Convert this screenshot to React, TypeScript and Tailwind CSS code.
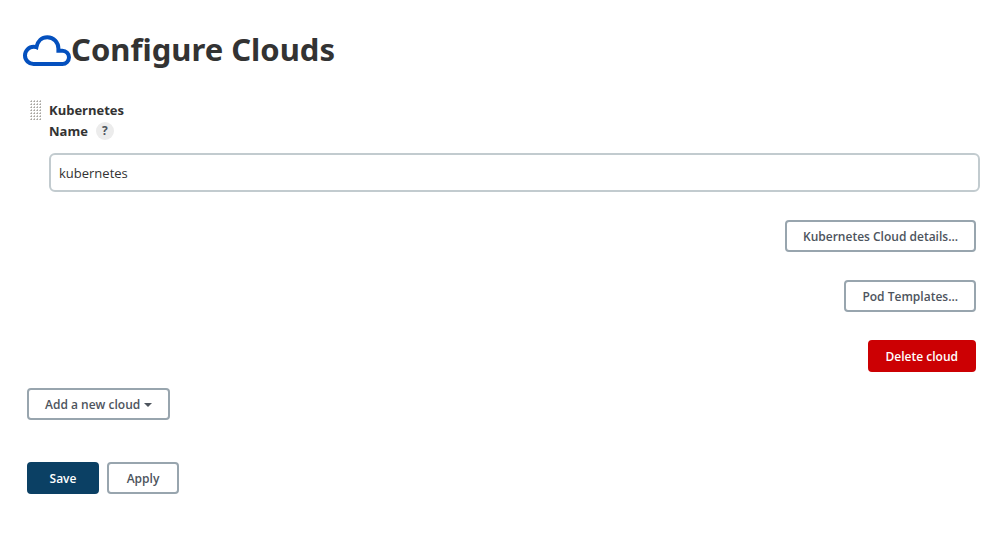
import { useState } from "react";
import type { ButtonHTMLAttributes } from "react";

const variants = {
  outline: "border-[#98a5ae] bg-white text-[#4d545d]",
  danger: "border-[#cc0003] bg-[#cc0003] text-white",
  primary: "border-[#0b4064] bg-[#0b4064] text-white",
};

type ButtonProps = ButtonHTMLAttributes<HTMLButtonElement> & {
  variant?: keyof typeof variants;
};

function Button({ variant = "outline", className = "px-4", ...props }: ButtonProps) {
  return (
    <button
      type="button"
      className={`flex h-8 items-center justify-center rounded border-2 pt-0.5 text-xs font-semibold whitespace-nowrap ${variants[variant]} ${className}`}
      {...props}
    />
  );
}

function CloudIcon() {
  return (
    <svg
      className="h-8 w-12 shrink-0"
      viewBox="0 0 48 32"
      fill="none"
      stroke="#0450be"
      strokeWidth="4"
      aria-hidden="true"
    >
      <path d="M10.6 29A8.6 8.6 0 0 1 10.6 11.8C11.8 11.8 12.6 11.9 13.4 12.2C14.5 6.2 18.8 2.2 24.3 2.2C30.8 2.2 35.4 7.4 35.4 13.6V15.7H39.35A6.65 6.65 0 0 1 39.35 29Z" />
    </svg>
  );
}

function DragHandle() {
  return (
    <svg className="mt-1 h-5 w-3 shrink-0" viewBox="0 0 12 20" aria-hidden="true">
      <defs>
        <pattern id="grip" width="3" height="3" patternUnits="userSpaceOnUse">
          <rect x="0" y="1" width="2" height="1" fill="#c8c6c2" />
          <rect x="1" y="0" width="1" height="1" fill="#c8c6c2" />
          <rect x="1" y="1" width="1" height="1" fill="#a5a39f" />
        </pattern>
      </defs>
      <rect width="12" height="20" fill="url(#grip)" />
    </svg>
  );
}

export default function App() {
  const [name, setName] = useState("kubernetes");
  return (
    <main className="bg-white px-[23px] pt-[30px] pb-10 font-['Open_Sans','Noto_Sans',sans-serif] text-sm text-[#333333]">
      <h1 className="flex h-[42px] items-center font-['Noto_Sans','Open_Sans',sans-serif] text-[31px] leading-9 font-bold">
        <CloudIcon />
        <span className="pb-1">Configure Clouds</span>
      </h1>

      <form>
        <section className="mt-6 flex gap-[7px] pl-[7px]">
          <DragHandle />
          <div className="min-w-0 flex-1">
            <h2 className="pt-1 text-[13px]/[20px] font-bold">Kubernetes</h2>
            <div className="flex h-[22px] items-center gap-2">
              <label htmlFor="cloud-name" className="text-[13px] font-bold">
                Name
              </label>
              <button
                type="button"
                aria-label="Help for name"
                className="flex size-[18px] items-center justify-center rounded-full bg-[#ececec] text-xs font-bold text-[#4d545d]"
              >
                ?
              </button>
            </div>
            <input
              id="cloud-name"
              value={name}
              onChange={(event) => setName(event.target.value)}
              className="mt-[11px] block h-[39px] w-full rounded-md border-2 border-[#c2cbcf] bg-white px-2 text-[13px]"
            />
            <div className="mt-7 flex flex-col items-end gap-7 pr-1">
              <Button>Kubernetes Cloud details...</Button>
              <Button>Pod Templates...</Button>
              <Button variant="danger">Delete cloud</Button>
            </div>
          </div>
        </section>

        <div className="mt-4 flex pl-1">
          <Button aria-haspopup="menu">
            Add a new cloud
            <svg className="ml-1 h-1 w-2" viewBox="0 0 8 4" fill="currentColor" aria-hidden="true">
              <path d="M0 0H8L4 4Z" />
            </svg>
          </Button>
        </div>

        <div className="mt-[42px] flex gap-2 pl-1">
          <Button variant="primary" className="w-[72px]">
            Save
          </Button>
          <Button className="w-[72px]">Apply</Button>
        </div>
      </form>
    </main>
  );
}
